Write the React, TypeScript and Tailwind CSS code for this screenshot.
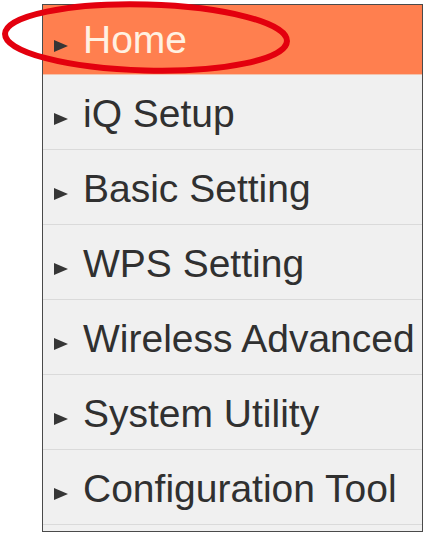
const items = [
  'Home',
  'iQ Setup',
  'Basic Setting',
  'WPS Setting',
  'Wireless Advanced',
  'System Utility',
  'Configuration Tool',
];

function Arrow() {
  return (
    <svg width="16" height="14" viewBox="0 0 16 14" className="mt-3 shrink-0">
      <polygon points="1,1 15,7 1,13" fill="#363636" />
    </svg>
  );
}

export default function App() {
  return (
    <div
      className="relative w-[423px] h-[534px] bg-white overflow-hidden"
      style={{ fontFamily: '"Liberation Sans", Arial, sans-serif' }}
    >
      <nav className="mt-[4px] ml-[42px] w-[381px] border border-[#4a4a4a] bg-[#f0f0f0] pb-[6px]">
        {items.map((label, i) => {
          const active = i === 0;
          return (
            <div
              key={label}
              className={
                active
                  ? 'flex items-center h-[70px] pl-[10px] gap-[14px] bg-[#ff7f4f] border-b border-[#f3c3ad]'
                  : 'flex items-center h-[75px] pl-[10px] gap-[14px] border-b border-[#dadada] pt-[2px]'
              }
            >
              <Arrow />
              <span
                className={
                  active
                    ? 'text-[39px] leading-none text-[#fff1e2] whitespace-nowrap'
                    : 'text-[39px] leading-none text-[#303030] whitespace-nowrap'
                }
              >
                {label}
              </span>
            </div>
          );
        })}
      </nav>

      {/* hand-drawn highlight ring around the active entry */}
      <svg
        className="absolute left-0 top-0 pointer-events-none"
        width="300"
        height="80"
        viewBox="0 0 300 80"
      >
        <ellipse
          cx="146"
          cy="37.5"
          rx="141"
          ry="33"
          fill="none"
          stroke="#e3000e"
          strokeWidth="6"
          transform="rotate(1.5 146 37.5)"
        />
      </svg>
    </div>
  );
}
